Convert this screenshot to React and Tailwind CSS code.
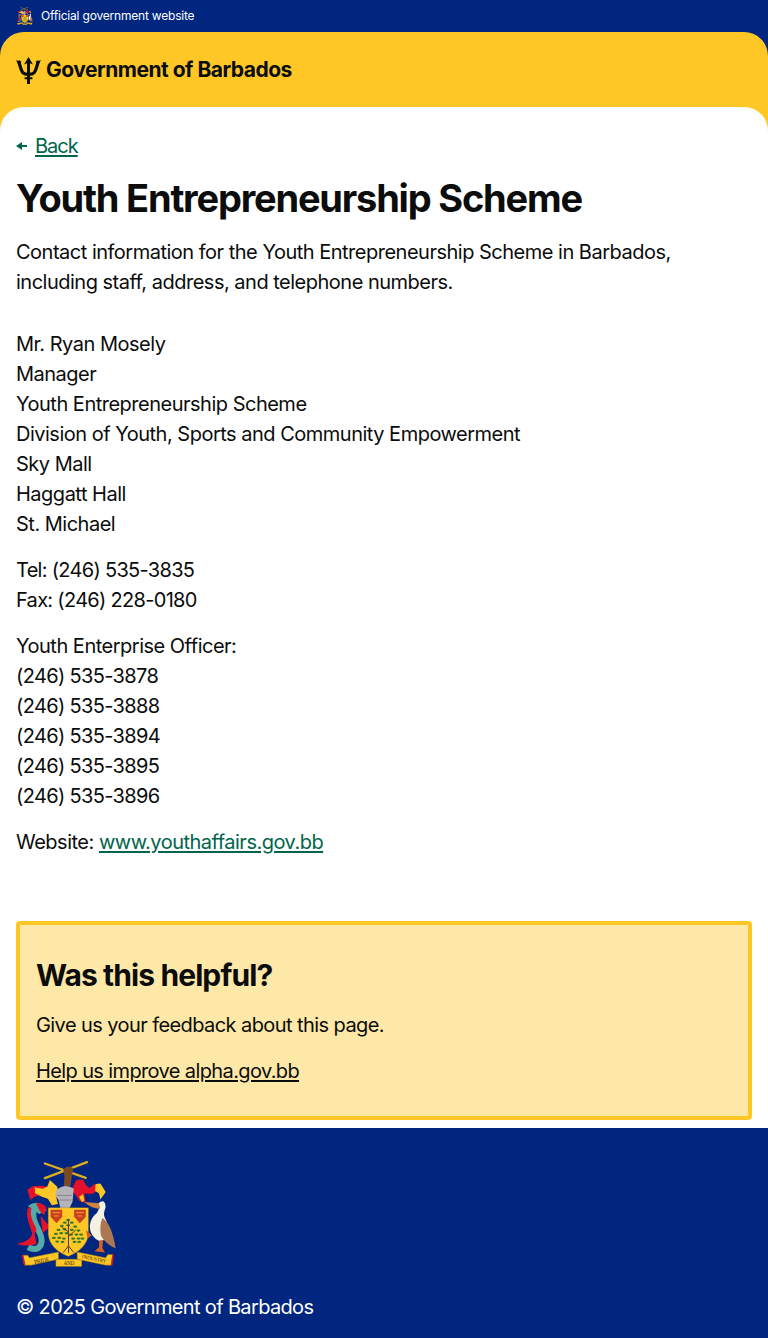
import React from 'react';

// leaf clusters of the fig tree on the shield
const LEAVES = [
  [205, 240], [195, 248], [216, 248], [186, 258], [205, 256], [226, 260], [176, 270], [194, 268], [216, 270], [236, 272],
  [168, 282], [184, 280], [200, 280], [214, 284], [230, 284], [244, 284], [162, 294], [178, 294], [192, 296], [220, 296], [236, 296], [248, 296],
  [172, 305], [188, 306], [224, 306], [238, 306],
];

// Coat of arms, drawn on a 304x324 grid
const CoatOfArms = ({ className }) => (
  <svg viewBox="48 60 304 324" className={className} aria-hidden="true">
    {/* crossed cane */}
    <path d="M135 70L258 113M262 66L135 114" stroke="#dcae1e" strokeWidth="7" strokeLinecap="round" fill="none" />
    {/* fist and neck */}
    <path d="M190 88Q205 72 220 84L216 108L212 138H192L194 108Z" fill="#7a4a24" />
    {/* left mantling */}
    <path d="M172 156Q140 132 112 138Q100 134 82 150L92 180Q100 170 116 166Q140 164 172 176Z" fill="#e4112a" />
    <path d="M150 120L172 140L176 160L168 168L174 192L156 196L144 176L126 170L106 160L104 142L128 146L142 140Z" fill="#ffc726" />
    {/* right mantling */}
    <path d="M214 150L230 120L250 118L258 134L268 144L288 130L296 150L278 162L254 160L258 190L238 182L230 168Z" fill="#e4112a" />
    <path d="M238 170L250 162L254 182L246 186Z" fill="#ffc726" />
    <path d="M288 132L302 130L318 156L302 178L298 160L286 152Z" fill="#ffc726" />
    {/* helmet */}
    <path d="M170 150Q196 128 222 146L218 186L208 206H182L176 180L166 166Z" fill="#b4b4b8" />
    <path d="M172 166H216M178 180H214" stroke="#85858b" strokeWidth="3" fill="none" />
    {/* dolphin */}
    <path d="M104 205C90 232 112 258 122 285C132 314 116 338 84 322" stroke="#55aba6" strokeWidth="18" fill="none" />
    <path d="M84 198Q108 180 132 196L140 212L118 222L106 214Z" fill="#55aba6" />
    <path d="M108 190Q128 186 140 204L132 226L120 214ZM86 200C72 228 92 256 100 292L110 268C100 246 88 228 94 204Z" fill="#e4112a" />
    <path d="M122 228L150 260L128 280ZM100 262C100 296 80 306 50 312C70 318 92 318 110 312Z" fill="#e4112a" />
    {/* shield */}
    <path d="M145 203H266V282Q262 326 205 350Q148 326 145 282Z" fill="#ffc726" stroke="#8a6a14" strokeWidth="1" />
    <path d="M152 209H187V230L170 250L152 230ZM223 209H258V230L240 250L223 230Z" fill="#c8401f" />
    <path d="M158 218H181M162 228H177M229 218H252M233 228H247" stroke="#f2a02a" strokeWidth="3" fill="none" />
    {/* fig tree */}
    {LEAVES.map(([cx, cy]) => (
      <ellipse key={`${cx}-${cy}`} cx={cx} cy={cy} rx="6" ry="3.5" fill="#2f7a2c" />
    ))}
    <path d="M206 240V320M206 276L186 262M206 290L228 270M206 318L190 338M206 318L222 338M206 322V340" stroke="#5a3a1c" strokeWidth="3" fill="none" />
    {/* pelican */}
    <path d="M296 192Q300 182 312 184Q322 194 314 214Q310 228 320 242L330 296L300 304Q270 290 270 258Q272 234 292 218L300 202Z" fill="#f6f2e2" />
    <path d="M254 186L298 190L300 206Q274 206 254 186Z" fill="#d0823e" />
    <path d="M308 234Q336 250 348 326Q318 312 304 288Q298 256 308 234Z" fill="#ab7852" />
    <path d="M258 270L276 286L264 296ZM298 302V322L284 334L316 338L308 324L310 300Z" fill="#d4601e" />
    {/* scroll */}
    <path d="M68 346H84L88 354L176 336V358L94 376H74Z" fill="#ffc726" stroke="#8a6a14" strokeWidth="1.5" />
    <path d="M168 358H246V380H168Z" fill="#ffc726" stroke="#8a6a14" strokeWidth="1.5" />
    <path d="M232 336L318 354L324 344H340L336 376H318L232 358Z" fill="#ffc726" stroke="#8a6a14" strokeWidth="1.5" />
    <path d="M68 346L74 376M340 344L336 376" stroke="#e4112a" strokeWidth="5" fill="none" />
    <text x="126" y="368" fontSize="17" fontFamily="'Liberation Serif', serif" fill="#3a2c10" textAnchor="middle" transform="rotate(-12 126 368)">PRIDE</text>
    <text x="207" y="376" fontSize="16" fontFamily="'Liberation Serif', serif" fill="#3a2c10" textAnchor="middle">AND</text>
    <text x="282" y="362" fontSize="16" fontFamily="'Liberation Serif', serif" fill="#3a2c10" textAnchor="middle" transform="rotate(12 282 362)">INDUSTRY</text>
  </svg>
);

const Trident = () => (
  <svg viewBox="0 0 25 27" className="w-[25px] h-[27px] shrink-0" aria-hidden="true">
    <path d="M2.4 4C4.2 8 4.6 13.4 7 15.8C9 17.8 16 17.8 18 15.8C20.4 13.4 20.8 8 22.6 4" stroke="#0b0c0c" strokeWidth="3.2" fill="none" />
    <path d="M0 3.2L5.4 4.4L3.4 8.5ZM25 3.2L19.6 4.4L21.6 8.5Z" fill="#0b0c0c" />
    <path d="M12.5 0L17 7.6L14 6.2V20.2H16.4V22.2H14V27H11V22.2H8.6V20.2H11V6.2L8 7.6Z" fill="#0b0c0c" />
  </svg>
);

const lines = (items) => items.map((text, i) => (
  <React.Fragment key={text}>
    {i > 0 && <br />}
    {text}
  </React.Fragment>
));

const App = () => {
  return (
    <div className="bg-[#00267f] text-[#0b0c0c] font-['Inter','Noto_Sans',sans-serif]">
      <div className="h-8 flex items-center gap-2 px-4 text-white text-xs tracking-[-0.2px]">
        <CoatOfArms className="w-[17px] h-[18px]" />
        <span>Official government website</span>
      </div>

      <div className="bg-[#ffc726] rounded-t-3xl">
        <div className="h-[75px] flex items-center gap-[5px] px-4 pt-[1px]">
          <Trident />
          <span className="text-[21px] font-bold tracking-[-0.5px]">Government of Barbados</span>
        </div>

        <main className="bg-white rounded-t-3xl px-4 pt-6 pb-2 text-xl leading-[30px] tracking-[-0.5px]">
          <div className="flex items-center gap-2 h-[30px] text-[#00654a]">
            <svg viewBox="0 0 11 8" className="w-[11px] h-2" aria-hidden="true">
              <path d="M0 4L6 0V3H11V5H6V8Z" fill="#00654a" />
            </svg>
            <a href="#back" className="underline underline-offset-2 tracking-[-1px]">Back</a>
          </div>

          <h1 className="mt-3 text-[38px] leading-[50px] font-bold tracking-[-1.2px]">Youth Entrepreneurship Scheme</h1>
          <p className="mt-[14px]">
            Contact information for the Youth Entrepreneurship Scheme in Barbados, including staff, address, and telephone numbers.
          </p>

          <p className="mt-[32px]">
            {lines(['Mr. Ryan Mosely', 'Manager', 'Youth Entrepreneurship Scheme', 'Division of Youth, Sports and Community Empowerment', 'Sky Mall', 'Haggatt Hall', 'St. Michael'])}
          </p>
          <p className="mt-4 tracking-[-0.7px]">{lines(['Tel: (246) 535-3835', 'Fax: (246) 228-0180'])}</p>
          <p className="mt-4">
            <span>Youth Enterprise Officer:</span>
            <br />
            <span className="tracking-[-0.65px]">
              {lines(['(246) 535-3878', '(246) 535-3888', '(246) 535-3894', '(246) 535-3895', '(246) 535-3896'])}
            </span>
          </p>
          <p className="mt-4">
            Website: <a href="#site" className="text-[#00654a] underline underline-offset-2">www.youthaffairs.gov.bb</a>
          </p>

          <section className="mt-[64px] bg-[#fee8a8] border-4 border-[#ffc726] rounded-[4px] px-4 pt-[28px] pb-[30px]">
            <h2 className="text-[30px] leading-[44px] font-bold tracking-[-0.9px]">Was this helpful?</h2>
            <p className="mt-[13px] tracking-[-0.58px]">Give us your feedback about this page.</p>
            <p className="mt-4">
              <a href="#feedback" className="underline underline-offset-2 tracking-[-0.62px]">Help us improve alpha.gov.bb</a>
            </p>
          </section>
        </main>
      </div>

      <footer className="h-[210px] px-4 pt-[32px] text-white text-xl leading-[30px] tracking-[-0.65px]">
        <CoatOfArms className="w-[101px] h-[108px]" />
        <p className="mt-[24px]">© 2025 Government of Barbados</p>
      </footer>
    </div>
  );
};

export default App;
